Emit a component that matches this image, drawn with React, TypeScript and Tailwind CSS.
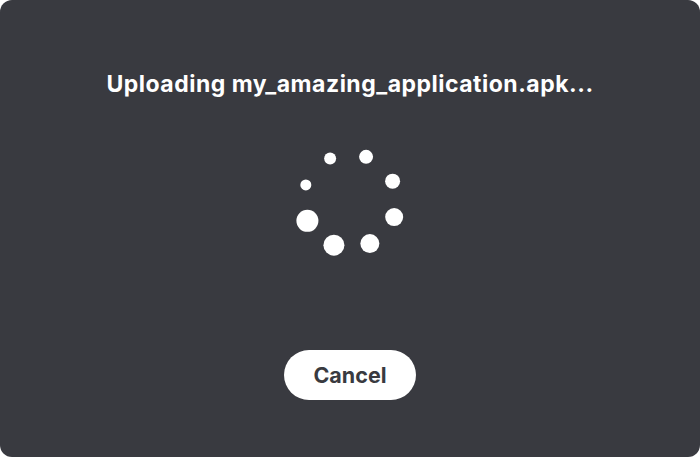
const DOTS = [5.5, 6, 7, 7.5, 9, 9.5, 10.5, 11]

function Spinner() {
	// dots grow clockwise, starting at the small one on the left
	return (
		<svg width="110" height="110" viewBox="0 0 110 110" aria-hidden>
			{DOTS.map((r, i) => {
				const a = ((200 + i * 45) * Math.PI) / 180
				return <circle key={i} cx={55 + 47 * Math.cos(a)} cy={55 + 47 * Math.sin(a)} r={r} fill="#ffffff" />
			})}
		</svg>
	)
}

export default function App() {
	return (
		<div className="h-[457px] w-[700px] bg-white font-['Inter','Liberation_Sans',sans-serif]">
			<div className="flex h-full w-full flex-col items-center rounded-[12px] bg-[#393a40] pt-[70px]">
				<h1 className="text-[23px] font-bold leading-[28px] tracking-[0.5px] text-white">
					Uploading my_amazing_application.apk...
				</h1>
				<div className="mt-[48px]">
					<Spinner />
				</div>
				<button
					type="button"
					className="mt-[94px] h-[50px] w-[132px] rounded-full bg-white text-[21.5px] font-bold text-[#393a40]"
				>
					Cancel
				</button>
			</div>
		</div>
	)
}
